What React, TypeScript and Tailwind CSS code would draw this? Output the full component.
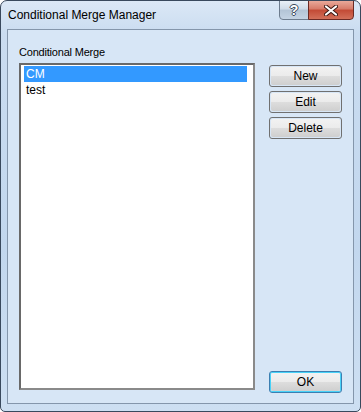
import React from "react";

const items = ["CM", "test"];

function WinButton({ label, primary }: { label: string; primary?: boolean }) {
  return (
    <div
      className={
        primary
          ? "h-[22px] w-[73px] rounded-[3px] border border-[#3c7fb1] p-px shadow-[inset_0_0_0_1px_#48d2f8]"
          : "h-[22px] w-[73px] rounded-[3px] border border-[#707070] p-px"
      }
    >
      <div className="flex h-full w-full items-center justify-center rounded-[2px] bg-[linear-gradient(#f2f2f2_0%,#ebebeb_50%,#dddddd_51%,#cfcfcf_100%)] text-[12px] leading-none text-black">
        {label}
      </div>
    </div>
  );
}

export default function App() {
  return (
    <div
      className="relative h-[412px] w-[361px] overflow-hidden rounded-t-[7px] rounded-b-[5px] border border-[#39495d] bg-[linear-gradient(#dbe8f6_0%,#cadcf0_8%,#c2d7ee_60%,#cddff2_100%)]"
      style={{ fontFamily: '"Liberation Sans", Arial, sans-serif' }}
    >
      {/* Title bar */}
      <div className="flex h-[28px] items-start justify-between pl-[7px] pr-[6px]">
        <div className="pt-[6px] text-[12px] leading-[16px] text-black">
          Conditional Merge Manager
        </div>
        <div className="-mt-px flex">
          <div className="flex h-[20px] w-[30px] items-center justify-center rounded-bl-[4px] border border-[#6d7c8e] bg-[linear-gradient(#e9f0f7_0%,#cfdbe8_45%,#b3c4d6_50%,#c4d3e3_100%)] text-[14px] font-bold text-white [text-shadow:1px_0_0_#3b4a5c,-1px_0_0_#3b4a5c,0_1px_0_#3b4a5c,0_-1px_0_#3b4a5c]">
            ?
          </div>
          <div className="-ml-px flex h-[20px] w-[46px] items-center justify-center rounded-br-[4px] border border-[#6b2a24] bg-[linear-gradient(#e9a99a_0%,#d67a68_45%,#c24a35_50%,#d2705a_100%)]">
            <svg width="14" height="11" viewBox="0 0 14 11">
              <path
                d="M2 1.5 L12 9.5 M12 1.5 L2 9.5"
                stroke="#3a1712"
                strokeWidth="4"
                strokeLinecap="round"
              />
              <path
                d="M2 1.5 L12 9.5 M12 1.5 L2 9.5"
                stroke="#ffffff"
                strokeWidth="2.2"
                strokeLinecap="round"
              />
            </svg>
          </div>
        </div>
      </div>

      {/* Client area */}
      <div className="mx-[6px] flex h-[375px] border border-[#8496ab] bg-[#d7e6f6] px-[11px] pt-[14px] pb-[10px]">
        <div className="flex flex-1 flex-col pb-[3px]">
          <div className="h-[16px] text-[11px] leading-[16px] tracking-[-0.2px] text-black">
            Conditional Merge
          </div>
          <div className="mt-[3px] flex-1 border-2 border-t-[#696969] border-l-[#696969] border-r-[#8a8a8a] border-b-[#8a8a8a] bg-white pt-[1px] pl-[3px] pr-[6px]">
            {items.map((item, i) => (
              <div
                key={item}
                className={
                  i === 0
                    ? "h-[16px] bg-[#3399ff] pl-[2px] text-[12px] leading-[16px] text-white"
                    : "h-[16px] pl-[2px] text-[12px] leading-[16px] text-black"
                }
              >
                {item}
              </div>
            ))}
          </div>
        </div>
        <div className="ml-[14px] flex w-[73px] flex-col gap-[4px] pt-[21px]">
          <WinButton label="New" />
          <WinButton label="Edit" />
          <WinButton label="Delete" />
          <div className="mt-auto">
            <WinButton label="OK" primary />
          </div>
        </div>
      </div>
    </div>
  );
}
